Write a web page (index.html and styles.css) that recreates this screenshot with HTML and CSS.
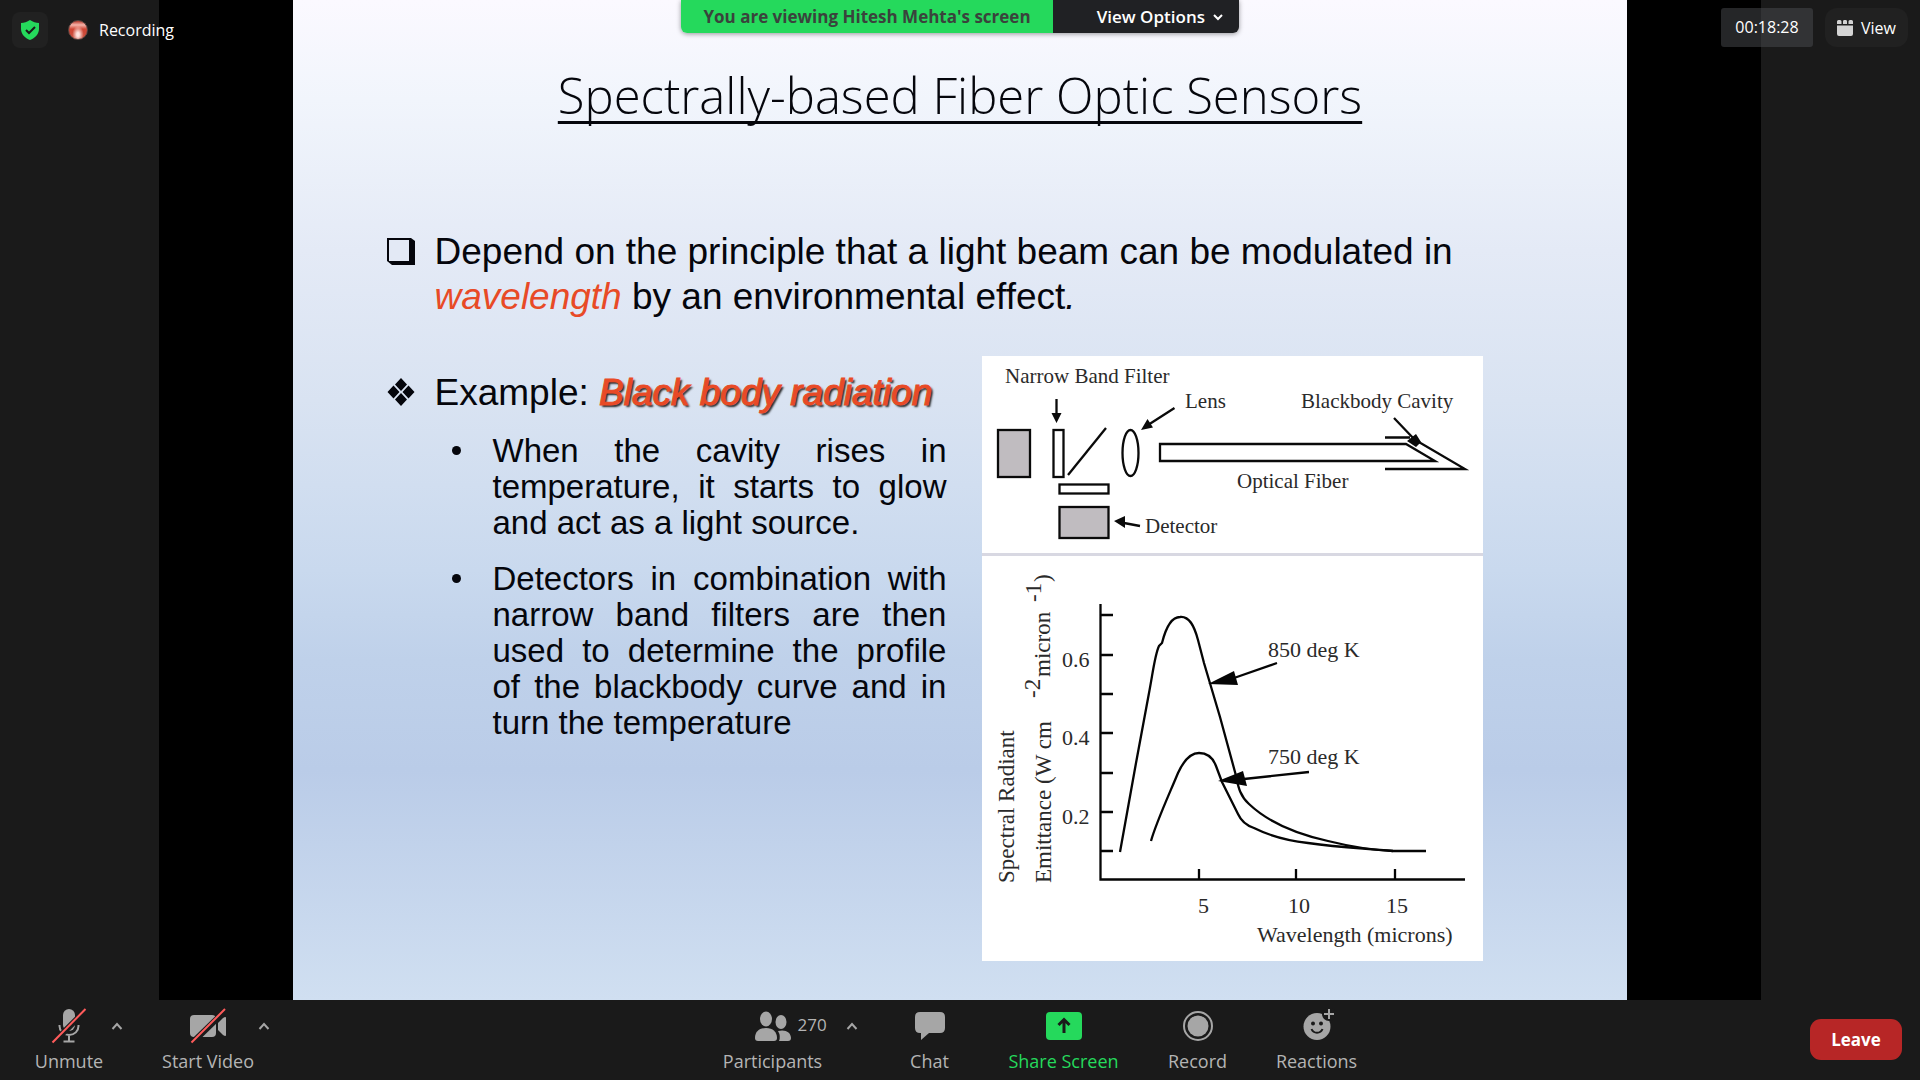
FILE: index.html
```html
<!DOCTYPE html>
<html lang="en">
<head>
<meta charset="utf-8">
<meta name="viewport" content="width=device-width, initial-scale=1">
<title>Meeting</title>
<link rel="stylesheet" href="styles.css">
</head>
<body>
<div class="meeting">
  <main class="stage">
    <div class="shared-screen">
      <article class="slide">
        <h1 class="slide-title">Spectrally-based Fiber Optic Sensors</h1>
        <div class="point">
          <svg class="marker" viewBox="0 0 28 28" aria-hidden="true"><path d="M0 1h24l4 3v24H5l-5-4z" fill="#05060c"/><path d="M2 3h20v21H2z" fill="#e3e9f5"/></svg>
          <p class="lead">Depend on the principle that a light beam can be modulated in <em>wavelength</em> by an environmental effect<i>.</i></p>
        </div>
        <div class="columns">
          <div class="example">
            <div class="point">
              <svg class="marker" viewBox="0 0 28 28" aria-hidden="true"><path d="M14 0l6 6.500-6 6.500-6-6.500zM14 15l6 6.500-6 6.500-6-6.500zM6.500 7.500l6 6.500-6 6.500L.5 14zM21.500 7.500l6 6.500-6 6.500-6-6.500z" fill="#05060c"/></svg>
              <p class="lead">Example: <em class="glow">Black body radiation</em></p>
            </div>
            <ul class="details">
              <li>When the cavity rises in temperature, it starts to glow and act as a light source.</li>
              <li>Detectors in combination with narrow band filters are then used to determine the profile of the blackbody curve and in turn the temperature</li>
            </ul>
          </div>
          <figure class="figure">
            <svg class="schematic" viewBox="0 0 501 197" role="img" aria-label="Blackbody fiber sensor schematic">
              <g fill="none" stroke="#0a0a0a" stroke-width="2.300">
                <rect x="16" y="74" width="32" height="47" fill="#c0bcc0"/>
                <rect x="71.500" y="74" width="10" height="47"/>
                <path d="M86 119L124 72"/>
                <ellipse cx="148.500" cy="97" rx="8" ry="23"/>
                <path d="M424 88H178v17h275zM403 81.500h25M403 113h80L430 82"/>
                <rect x="77.500" y="128.500" width="49" height="9"/>
                <rect x="77.500" y="151" width="49" height="31" fill="#c0bcc0"/>
                <path d="M74.500 43v16M192.500 52L166 69M412 62l21 22M158 170l-16-3"/>
              </g>
              <g fill="#0a0a0a">
                <path d="M69.500 57h10l-5 10zM159 74l6.500-11 5.500 8.500zM132 165l11-5v12zM425 85l9-7 5 8-5 5z"/>
              </g>
              <g class="serif small">
                <text x="23" y="27">Narrow Band Filter</text>
                <text x="203" y="52">Lens</text>
                <text x="319" y="52">Blackbody Cavity</text>
                <text x="255" y="132">Optical Fiber</text>
                <text x="163" y="177">Detector</text>
              </g>
            </svg>
            <svg class="chart" viewBox="0 0 501 405" role="img" aria-label="Spectral radiant emittance against wavelength">
              <g fill="none" stroke="#050505" stroke-width="2.300">
                <path d="M118.500 48v275.500H483M118 59h13M118 99h13M118 138h13M118 177h13M118 217h13M118 256h13M118 295h13M217 324v-11M314 324v-11M413 324v-11"/>
                <path d="M138 296L154 207 167 137C171 116 173 98 177 90L180 87C184 71 190 61 198 61C207 60 212 69 216 84L222 107 238 161 253 216C256 227 256 238 267 248C287 267 315 278 346 285C370 291 390 294 411 295H444"/>
                <path d="M169 285C174 267 186 241 196 217C202 204 209 197 217 197C225 197 231 202 234 210L240 226 256 258C260 267 266 270 272 272C290 281 309 285 326 287C360 292 380 292 411 295"/>
                <path d="M295 107L252 122M327 216L262 223"/>
              </g>
              <path d="M226 128l26-13 4 14zM236 225l25-10 4 15z" fill="#050505"/>
              <g class="serif medium">
                <text x="80" y="111">0.6</text>
                <text x="80" y="189">0.4</text>
                <text x="80" y="268">0.2</text>
                <text x="286" y="101">850 deg K</text>
                <text x="286" y="208">750 deg K</text>
                <text x="216" y="357">5</text>
                <text x="306" y="357">10</text>
                <text x="404" y="357">15</text>
                <text x="275" y="386">Wavelength (microns)</text>
              </g>
              <g class="serif large">
                <text transform="translate(32 327) rotate(-90)">Spectral Radiant</text>
                <text transform="translate(69 327) rotate(-90)">Emittance (W cm</text>
                <text transform="translate(58 142) rotate(-90)">-2</text>
                <text transform="translate(68 121) rotate(-90)">micron</text>
                <text transform="translate(59 46) rotate(-90)">-1</text>
                <text transform="translate(68 26) rotate(-90)">)</text>
              </g>
            </svg>
          </figure>
        </div>
      </article>
    </div>

    <div class="status">
      <button class="security" aria-label="Meeting security">
        <svg width="20" height="22" viewBox="0 0 20 22"><path d="M10 1c3 2 6 3 9 3v6c0 5-4 9-9 11C5 19 1 15 1 10V4c3 0 6-1 9-3z" fill="#25d95c"/><path d="M6 11l3 3 6-6" fill="none" stroke="#1a1a1a" stroke-width="2"/></svg>
      </button>
      <span class="rec-dot"></span>
      <span class="rec-text">Recording</span>
    </div>

    <div class="banner">
      <span class="banner-text">You are viewing Hitesh Mehta's screen</span>
      <button class="banner-options">View Options
        <svg width="10" height="8" viewBox="0 0 10 8" aria-hidden="true"><path d="M1 2l4 4 4-4" fill="none" stroke="#fff" stroke-width="2"/></svg>
      </button>
    </div>

    <div class="corner">
      <span class="timer">00:18:28</span>
      <button class="view">
        <svg width="16" height="16" viewBox="0 0 16 16" aria-hidden="true"><path d="M0 1.500Q0 0 1.500 0H3q1.500 0 1.500 1.500V4H0zM6 1.500Q6 0 7 0h2q1 0 1 1.500V4H6zM11.500 1.500Q11.500 0 13 0h1.500Q16 0 16 1.500V4h-4.500zM0 5.500h16V14q0 2-2 2H2q-2 0-2-2z" fill="#d4d4d4"/></svg>
        View
      </button>
    </div>
  </main>

  <footer class="toolbar">
    <div class="group left">
      <div class="control">
        <button class="tool tool-narrow">
          <svg width="36" height="36" viewBox="0 0 36 36" aria-hidden="true"><rect x="12" y="1" width="12" height="22" rx="6" fill="#a6a6a6"/><path d="M8.500 17v1c0 5 4 9 9.500 9s9.500-4 9.500-9v-1M18 27v6M12.500 33.500h11" fill="none" stroke="#a6a6a6" stroke-width="2"/><path d="M2 35L35 2" stroke="#1a1a1a" stroke-width="6"/><path d="M1.500 34.500L34.500 1" stroke="#ff5b5b" stroke-width="2"/></svg>
          Unmute
        </button>
        <button class="caret" aria-label="Audio options"><svg width="12" height="8" viewBox="0 0 12 8"><path d="M1.500 7L6 2l4.500 5" fill="none" stroke="#a6a6a6" stroke-width="2"/></svg></button>
      </div>
      <div class="control">
        <button class="tool tool-mid">
          <svg width="36" height="36" viewBox="0 0 36 36" aria-hidden="true"><rect x="0" y="7" width="26" height="22" rx="4" fill="#a6a6a6"/><path d="M28 15l5-5q3-2 3 0v17q0 2-3 0l-5-5z" fill="#a6a6a6"/><path d="M2 35L36 2" stroke="#1a1a1a" stroke-width="6"/><path d="M1.500 34.500L35 1" stroke="#ff5b5b" stroke-width="2"/></svg>
          Start Video
        </button>
        <button class="caret" aria-label="Video options"><svg width="12" height="8" viewBox="0 0 12 8"><path d="M1.500 7L6 2l4.500 5" fill="none" stroke="#a6a6a6" stroke-width="2"/></svg></button>
      </div>
    </div>

    <div class="group center">
      <div class="control people">
        <button class="tool tool-roomy">
          <span class="icon-wrap">
            <svg width="36" height="36" viewBox="0 0 36 36" aria-hidden="true"><g fill="#a6a6a6"><ellipse cx="11" cy="11" rx="6" ry="7.500"/><path d="M0 30c0-6 4-10 11-10s11 4 11 10q0 3-3 3H3q-3 0-3-3z"/><ellipse cx="26" cy="14" rx="5.500" ry="7"/><path d="M23 23c7-2 13 1 13 7q0 3-3 3h-9q2-5-1-10z"/></g></svg>
            <span class="count">270</span>
          </span>
          Participants
        </button>
        <button class="caret" aria-label="Participant options"><svg width="12" height="8" viewBox="0 0 12 8"><path d="M1.500 7L6 2l4.500 5" fill="none" stroke="#a6a6a6" stroke-width="2"/></svg></button>
      </div>
      <button class="tool tool-wide">
        <svg width="36" height="36" viewBox="0 0 36 36" aria-hidden="true"><path d="M8 4h20q5 0 5 5v11q0 5-5 5H17l-8 7v-7H8q-5 0-5-5V9q0-5 5-5z" fill="#a6a6a6"/></svg>
        Chat
      </button>
      <button class="tool tool-wide share">
        <svg width="36" height="36" viewBox="0 0 36 36" aria-hidden="true"><rect y="4" width="36" height="28" rx="4" fill="#25d95c"/><path d="M18 25V13M12.500 17l5.500-5.500 5.500 5.500" fill="none" stroke="#1a1a1a" stroke-width="3"/></svg>
        Share Screen
      </button>
      <button class="tool tool-wide">
        <svg width="36" height="36" viewBox="0 0 36 36" aria-hidden="true"><circle cx="18" cy="18" r="14" fill="none" stroke="#a6a6a6" stroke-width="2"/><circle cx="18" cy="18" r="10.500" fill="#a6a6a6"/></svg>
        Record
      </button>
      <button class="tool tool-roomy">
        <svg width="36" height="36" viewBox="0 0 36 36" aria-hidden="true"><circle cx="18" cy="18.500" r="13.500" fill="#a6a6a6"/><circle cx="30" cy="6" r="7" fill="#1a1a1a"/><path d="M30 1v10M25 6h10" stroke="#a6a6a6" stroke-width="2"/><circle cx="14" cy="15.500" r="2" fill="#1a1a1a"/><circle cx="22" cy="15.500" r="2" fill="#1a1a1a"/><path d="M12.500 21c2 5 9 5 11 0" fill="none" stroke="#1a1a1a" stroke-width="2"/></svg>
        Reactions
      </button>
    </div>

    <button class="leave">Leave</button>
  </footer>
</div>
</body>
</html>
```
FILE: styles.css
```css
* { box-sizing: border-box; }

body {
  margin: 0;
  background: #1a1a1a;
  color: #fff;
  font-family: "Open Sans", "Noto Sans", sans-serif;
}

button {
  margin: 0;
  padding: 0;
  border: 0;
  background: none;
  color: inherit;
  font: inherit;
  cursor: pointer;
}

svg { display: block; }

.meeting {
  display: flex;
  flex-direction: column;
  min-height: 100vh;
}

/* Shared content */
.stage {
  position: relative;
  flex: 1;
  display: flex;
  justify-content: center;
}

.shared-screen {
  display: flex;
  justify-content: center;
  width: 83.44%;
  background: #000;
}

.slide {
  width: 83.33%;
  padding: 62px 144px 39px 94px;
  background: linear-gradient(#fbf9ff 0%, #f1f5fc 10%, #e4eaf6 25%, #d9e3f2 40%, #c9d9ee 57%, #bfd1ea 66%, #bacce8 77%, #d0dff1 100%);
  color: #05060c;
  font-family: "Liberation Sans", Arial, sans-serif;
}

.slide-title {
  margin: 0 0 101px;
  padding-left: 50px;
  font-family: "Open Sans", "Noto Sans", sans-serif;
  font-weight: 300;
  font-size: 49px;
  line-height: 66px;
  text-align: center;
  text-decoration: underline;
  text-decoration-thickness: 3px;
  text-decoration-skip-ink: none;
  text-underline-offset: 7px;
}

.point {
  display: grid;
  grid-template-columns: 28px 1fr;
  column-gap: 20px;
}

.marker {
  width: 28px;
  height: 28px;
  margin-top: 8px;
}

.lead {
  margin: 0;
  font-size: 37px;
  line-height: 45px;
}

.lead em { color: #e84a26; }

.lead .glow {
  -webkit-text-stroke: 1px #e84a26;
  text-shadow: 2px 2px 2px #222;
}

.columns {
  display: grid;
  grid-template-columns: 1fr 501px;
  column-gap: 36px;
  margin-top: 37px;
}

.example { padding-top: 14px; }

.details {
  display: flex;
  flex-direction: column;
  gap: 20px;
  margin: 18px 0 0;
  padding-left: 106px;
  list-style: none;
  font-size: 33px;
  line-height: 36px;
  text-align: justify;
}

.details li { position: relative; }

.details li::before {
  content: "";
  position: absolute;
  top: 13px;
  left: -41px;
  width: 9px;
  height: 9px;
  border-radius: 50%;
  background: #05060c;
}

.figure {
  margin: 0;
  background: #fff;
}

.schematic {
  width: 100%;
  border-bottom: 3px solid #d8d8e2;
  box-sizing: content-box;
}

.chart { width: 100%; }

.serif {
  fill: #2a2a2a;
  font-family: "Liberation Serif", "Times New Roman", serif;
}

.small { font-size: 21px; }
.medium { font-size: 22px; }
.large { font-size: 23px; }

/* Overlays on the stage */
.status {
  position: absolute;
  top: 12px;
  left: 12px;
  display: flex;
  align-items: center;
  font-size: 16px;
}

.security {
  display: grid;
  place-items: center;
  width: 36px;
  height: 36px;
  border-radius: 8px;
  background: #212121;
}

.rec-dot {
  width: 20px;
  height: 20px;
  margin: 0 11px 0 20px;
  border: 1px solid #5a4440;
  border-radius: 50%;
  background: radial-gradient(ellipse at 50% 75%, #ffe3de 0 10%, transparent 45%), linear-gradient(#b9392b, #f5b5ab 22%, #cf4534 45%, #c9503f);
}

.banner {
  position: absolute;
  top: 0;
  left: 50%;
  display: flex;
  height: 33px;
  overflow: hidden;
  border-radius: 0 0 6px 6px;
  box-shadow: 0 1px 5px #0006;
  transform: translateX(-50%);
  font-weight: 700;
  font-size: 17px;
  line-height: 33px;
  white-space: nowrap;
}

.banner-text {
  width: 372px;
  background: #25d95c;
  color: #3a433c;
  text-align: center;
}

.banner-options {
  display: flex;
  align-items: center;
  justify-content: flex-end;
  gap: 8px;
  width: 186px;
  padding-right: 16px;
  background: #202124;
  font-weight: 600;
}

.corner {
  position: absolute;
  top: 8px;
  right: 12px;
  display: flex;
  gap: 12px;
  font-size: 16px;
}

.timer {
  width: 92px;
  border-radius: 3px;
  background: #4a4c5080;
  line-height: 39px;
  text-align: center;
}

.view {
  display: flex;
  align-items: center;
  justify-content: center;
  gap: 8px;
  width: 83px;
  height: 39px;
  border-radius: 12px;
  background: #212121;
}

/* Meeting controls */
.toolbar {
  display: flex;
  align-items: flex-start;
  justify-content: space-between;
  height: 80px;
  padding: 8px 18px 0 29px;
  color: #b4b4b4;
  font-size: 18px;
  line-height: 24px;
}

.group,
.control { display: flex; }

.left {
  gap: 35px;
  padding-right: 7px;
}

.tool {
  display: flex;
  flex-direction: column;
  align-items: center;
  gap: 5px;
  white-space: nowrap;
}

.tool-narrow { width: 80px; }
.tool-mid { width: 96px; }
.tool-roomy { width: 104px; }
.tool-wide { width: 134px; }

.share { color: #25d95c; }

.caret {
  display: grid;
  place-items: center;
  width: 16px;
  height: 36px;
}

.people { margin-right: 3px; }
.people .caret { margin-left: 19px; }

.icon-wrap { position: relative; }

.count {
  position: absolute;
  top: 5px;
  left: 43px;
  font-size: 17px;
}

.leave {
  width: 92px;
  height: 41px;
  margin-top: 11px;
  border-radius: 11px;
  background: #b72626;
  color: #fff;
  font-weight: 700;
  font-size: 17px;
}
```
